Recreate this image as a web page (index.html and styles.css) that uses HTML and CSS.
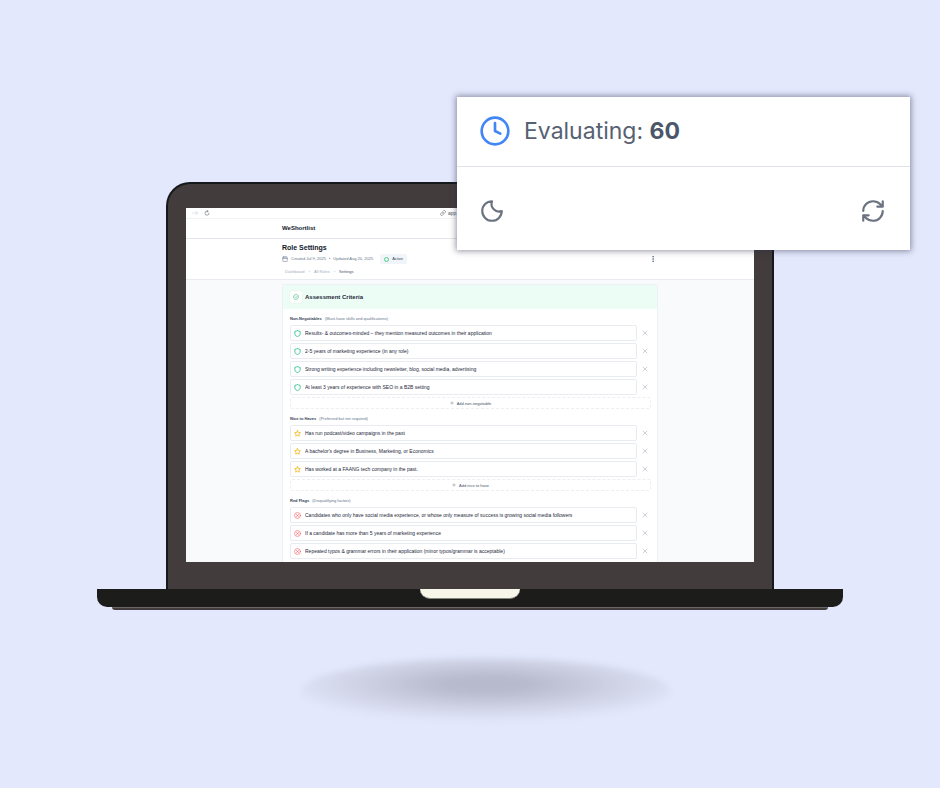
FILE: index.html
```html
<!DOCTYPE html>
<html lang="en">
<head>
  <meta charset="UTF-8">
  <title>WeShortlist - Role Settings</title>
  <link rel="stylesheet" href="styles.css">
</head>
<body>

  <!-- shared icons -->
  <svg class="sprite" aria-hidden="true">
    <symbol id="i-shield" viewBox="0 0 24 24"><path d="M12 1.500c2 2 5 3 9 3V14c0 4-4 7-9 8.500C7 21 3 18 3 14V4.500c4 0 7-1 9-3z"/></symbol>
    <symbol id="i-star" viewBox="0 0 24 24"><path d="M12 2l3.100 6.300 6.900 1-5 4.900 1.200 6.900L12 17.800l-6.200 3.300L7 14.200 2 9.300l6.900-1z"/></symbol>
    <symbol id="i-flag" viewBox="0 0 24 24"><circle cx="12" cy="12" r="10"/><path d="M15.500 8.500l-7 7M8.500 8.500l7 7"/></symbol>
    <symbol id="i-x" viewBox="0 0 24 24"><path d="M20 4L4 20M4 4l16 16"/></symbol>
    <symbol id="i-plus" viewBox="0 0 24 24"><path d="M4 12h16M12 4v16"/></symbol>
  </svg>

  <div class="scene">
    <div class="laptop">
      <div class="lid">
        <div class="screen">

          <div class="browser-bar">
            <svg class="icon forward" viewBox="0 0 24 24"><path d="M2 12h20M15 5l7 7-7 7"/></svg>
            <svg class="icon reload" viewBox="0 0 24 24"><path d="M20 13a8 8 0 1 1-8-8h4M12 1l4 4-4 4"/></svg>
            <span class="address">
              <svg class="icon" viewBox="0 0 24 24"><path d="M10 14a5 5 0 0 0 7 0l4-4a5 5 0 0 0-7-7l-2 2M14 10a5 5 0 0 0-7 0l-4 4a5 5 0 0 0 7 7l2-2"/></svg>
              app.weshortlist.com
            </span>
          </div>

          <header class="site-header">
            <div class="container brand">WeShortlist</div>
          </header>

          <section class="page-head">
            <div class="container">
              <h1>Role Settings</h1>
              <div class="meta">
                <svg class="icon" viewBox="0 0 24 24"><rect x="3" y="4" width="18" height="18" rx="2"/><path d="M8 1v6M16 1v6M3 10h18"/></svg>
                <span>Created Jul 9, 2025</span>
                <span>&bull;</span>
                <span>Updated Aug 20, 2025</span>
                <span class="badge"><i class="dot"></i>Active</span>
                <button class="menu" aria-label="More options"><svg class="icon" viewBox="0 0 24 24"><circle cx="12" cy="3" r="2"/><circle cx="12" cy="12" r="2"/><circle cx="12" cy="21" r="2"/></svg></button>
              </div>
              <nav class="crumbs">
                <a href="#">Dashboard</a>
                <span>&rsaquo;</span>
                <a href="#">All Roles</a>
                <span>&rsaquo;</span>
                <a href="#" class="current">Settings</a>
              </nav>
            </div>
          </section>

          <main>
            <div class="container card">
              <div class="card-head">
                <span class="card-icon"><svg class="icon" viewBox="0 0 24 24"><path d="M21.800 10A10 10 0 1 1 17 3.300M8 11l4 4L21 5"/></svg></span>
                <h2>Assessment Criteria</h2>
              </div>
              <div class="card-body">

                <div class="group must">
                  <h3>Non-Negotiables <small>(Must-have skills and qualifications)</small></h3>
                  <div class="row">
                    <label class="field"><svg class="icon"><use href="#i-shield"/></svg><input type="text" aria-label="Non-negotiable 1" value="Results- &amp; outcomes-minded – they mention measured outcomes in their application"></label>
                    <button class="remove" aria-label="Remove"><svg class="icon"><use href="#i-x"/></svg></button>
                  </div>
                  <div class="row">
                    <label class="field"><svg class="icon"><use href="#i-shield"/></svg><input type="text" aria-label="Non-negotiable 2" value="2-5 years of marketing experience (in any role)"></label>
                    <button class="remove" aria-label="Remove"><svg class="icon"><use href="#i-x"/></svg></button>
                  </div>
                  <div class="row">
                    <label class="field"><svg class="icon"><use href="#i-shield"/></svg><input type="text" aria-label="Non-negotiable 3" value="Strong writing experience including newsletter, blog, social media, advertising"></label>
                    <button class="remove" aria-label="Remove"><svg class="icon"><use href="#i-x"/></svg></button>
                  </div>
                  <div class="row">
                    <label class="field"><svg class="icon"><use href="#i-shield"/></svg><input type="text" aria-label="Non-negotiable 4" value="At least 3 years of experience with SEO in a B2B setting"></label>
                    <button class="remove" aria-label="Remove"><svg class="icon"><use href="#i-x"/></svg></button>
                  </div>
                  <button class="add"><svg class="icon"><use href="#i-plus"/></svg>Add non-negotiable</button>
                </div>

                <div class="group nice">
                  <h3>Nice to Haves <small>(Preferred but not required)</small></h3>
                  <div class="row">
                    <label class="field"><svg class="icon"><use href="#i-star"/></svg><input type="text" aria-label="Nice to have 1" value="Has run podcast/video campaigns in the past"></label>
                    <button class="remove" aria-label="Remove"><svg class="icon"><use href="#i-x"/></svg></button>
                  </div>
                  <div class="row">
                    <label class="field"><svg class="icon"><use href="#i-star"/></svg><input type="text" aria-label="Nice to have 2" value="A bachelor's degree in Business, Marketing, or Economics"></label>
                    <button class="remove" aria-label="Remove"><svg class="icon"><use href="#i-x"/></svg></button>
                  </div>
                  <div class="row">
                    <label class="field"><svg class="icon"><use href="#i-star"/></svg><input type="text" aria-label="Nice to have 3" value="Has worked at a FAANG tech company in the past."></label>
                    <button class="remove" aria-label="Remove"><svg class="icon"><use href="#i-x"/></svg></button>
                  </div>
                  <button class="add"><svg class="icon"><use href="#i-plus"/></svg>Add nice to have</button>
                </div>

                <div class="group flags">
                  <h3>Red Flags <small>(Disqualifying factors)</small></h3>
                  <div class="row">
                    <label class="field"><svg class="icon"><use href="#i-flag"/></svg><input type="text" aria-label="Red flag 1" value="Candidates who only have social media experience, or whose only measure of success is growing social media followers"></label>
                    <button class="remove" aria-label="Remove"><svg class="icon"><use href="#i-x"/></svg></button>
                  </div>
                  <div class="row">
                    <label class="field"><svg class="icon"><use href="#i-flag"/></svg><input type="text" aria-label="Red flag 2" value="If a candidate has more than 5 years of marketing experience"></label>
                    <button class="remove" aria-label="Remove"><svg class="icon"><use href="#i-x"/></svg></button>
                  </div>
                  <div class="row">
                    <label class="field"><svg class="icon"><use href="#i-flag"/></svg><input type="text" aria-label="Red flag 3" value="Repeated typos &amp; grammar errors in their application (minor typos/grammar is acceptable)"></label>
                    <button class="remove" aria-label="Remove"><svg class="icon"><use href="#i-x"/></svg></button>
                  </div>
                </div>

              </div>
            </div>
          </main>

        </div>
      </div>
      <div class="base"><div class="notch"></div></div>
      <div class="foot"></div>
    </div>

    <svg class="floor-shadow" viewBox="0 0 400 90" preserveAspectRatio="none">
      <defs>
        <radialGradient id="shade" cx="0.5" cy="0.4" r="0.55">
          <stop offset="0.2" stop-color="#b7bacc"/>
          <stop offset="0.6" stop-color="#cdd0e2"/>
          <stop offset="1" stop-color="#e2e6fa"/>
        </radialGradient>
        <filter id="soft" x="-10%" y="-30%" width="120%" height="160%"><feGaussianBlur stdDeviation="3"/></filter>
      </defs>
      <ellipse cx="200" cy="47" rx="185" ry="33" fill="url(#shade)" filter="url(#soft)"/>
    </svg>

    <aside class="popup">
      <div class="status">
        <svg class="icon" viewBox="0 0 24 24"><circle cx="12" cy="12" r="10"/><path d="M12 6v6l4 2"/></svg>
        <span>Evaluating: <strong>60</strong></span>
      </div>
      <div class="actions">
        <button aria-label="Dark mode"><svg class="icon" viewBox="0 0 24 24"><path d="M12 3a7 7 0 0 0 9 9 9 9 0 1 1-9-9z"/></svg></button>
        <button aria-label="Refresh"><svg class="icon" viewBox="0 0 24 24"><path d="M3 12a9 9 0 0 1 9-9 9.750 9.750 0 0 1 6.740 2.740L21 8M21 3v5h-5M21 12a9 9 0 0 1-9 9 9.750 9.750 0 0 1-6.740-2.740L3 16M8 16H3v5"/></svg></button>
      </div>
    </aside>
  </div>

</body>
</html>
```
FILE: styles.css
```css
* {
  box-sizing: border-box;
}
body {
  margin: 0;
  min-height: 100vh;
  background: #e3e8fd;
  font-family: Inter, "Liberation Sans", sans-serif;
}
h1, h2, h3 {
  margin: 0;
}
button {
  padding: 0;
  border: none;
  background: none;
  font-family: inherit;
  cursor: pointer;
}
a {
  color: inherit;
  text-decoration: none;
}
.sprite {
  display: none;
}
.icon {
  display: block;
  flex: none;
  width: 6px;
  height: 6px;
  fill: none;
  stroke: currentColor;
  stroke-width: 2;
  stroke-linecap: round;
  stroke-linejoin: round;
}
.scene {
  position: relative;
  max-width: 940px;
  margin: 0 auto;
  padding: 182px 97px 0;
}

/* laptop */
.lid {
  margin: 0 69px;
  padding: 24px 18px 27px;
  border: 2px solid #16191c;
  border-bottom: none;
  border-radius: 24px 24px 0 0;
  background: #433c3c;
}
.screen {
  height: 354px;
  overflow: hidden;
  background: #fff;
  color: #1e293b;
  font-family: "Liberation Sans", Arial, sans-serif;
}
.base {
  height: 18px;
  border-radius: 0 0 10px 10px;
  background: #1c1c1a;
}
.notch {
  width: 100px;
  height: 10px;
  margin: 0 auto;
  border-bottom: 1px solid #85857e;
  border-radius: 0 0 10px 10px;
  background: #f8f5e9;
}
.foot {
  height: 3px;
  margin: 0 15px;
  border-top: 1px solid #6b6565;
  border-radius: 0 0 3px 3px;
  background: #433c3c;
}
.floor-shadow {
  display: block;
  width: 400px;
  max-width: 100%;
  height: 90px;
  margin: 34px auto 0;
  transform: translateX(16px);
}

/* app */
.container {
  max-width: 376px;
  margin: 0 auto;
}
.browser-bar {
  display: flex;
  align-items: center;
  height: 11px;
  padding-left: 6px;
  border-bottom: 1px solid #f1f3f5;
  color: #4b5563;
  font-size: 5px;
}
.forward {
  color: #c4c8ce;
}
.reload {
  margin-left: 6px;
}
.address {
  display: flex;
  align-items: center;
  gap: 2px;
  margin-left: 230px;
}
.site-header {
  padding: 5px 0;
  border-bottom: 1px solid #e2e5ea;
}
.brand {
  font-size: 6px;
  line-height: 9px;
  font-weight: 700;
  color: #0f172a;
}
.page-head {
  padding: 4px 0 3px;
  border-bottom: 1px solid #e8ebef;
}
h1 {
  font-size: 7px;
  line-height: 9px;
  font-weight: 700;
  color: #0f172a;
}
.meta {
  display: flex;
  align-items: center;
  gap: 3px;
  margin-top: 2px;
  font-size: 4px;
  line-height: 10px;
  color: #64748b;
}
.badge {
  display: flex;
  align-items: center;
  gap: 3px;
  margin-left: 4px;
  padding: 0 4px;
  border-radius: 2px;
  background: #f1f5f9;
  color: #334155;
}
.dot {
  width: 5px;
  height: 5px;
  border: 1px solid #4ad28a;
  border-radius: 50%;
}
.menu {
  margin-left: auto;
  padding: 0 2px;
  color: #475569;
}
.crumbs {
  display: flex;
  gap: 4px;
  margin-top: 4px;
  padding-left: 3px;
  font-size: 4px;
  line-height: 8px;
  color: #a3adbb;
}
.current {
  color: #475569;
}
main {
  padding: 4px 0;
  background: #f8fafc;
}
.card {
  border: 1px solid #eef1f4;
  border-radius: 3px;
  background: #fff;
  overflow: hidden;
}
.card-head {
  display: flex;
  align-items: center;
  gap: 3px;
  height: 24px;
  padding: 0 7px;
  background: #ecfdf5;
}
.card-icon {
  padding: 3px;
  border-radius: 2px;
  background: #fff;
  box-shadow: 0 0 1px #cfd8d6;
  color: #10a36f;
}
h2 {
  font-size: 6px;
  font-weight: 700;
  line-height: 8px;
  color: #1e293b;
}
.card-body {
  display: grid;
  gap: 6px;
  padding: 6px 6px 20px 7px;
}
.group {
  display: grid;
  gap: 2px;
}
h3 {
  font-size: 4px;
  line-height: 8px;
  font-weight: 700;
  color: #334155;
}
h3 small {
  margin-left: 2px;
  font-size: 4px;
  font-weight: 400;
  color: #64748b;
}
.row {
  display: flex;
  align-items: center;
  gap: 5px;
}
.field {
  flex: 1;
  display: flex;
  align-items: center;
  gap: 4px;
  height: 16px;
  padding: 0 3px;
  border: 1px solid #e8ebf0;
  border-radius: 2px;
}
.field .icon {
  width: 7px;
  height: 7px;
  stroke-width: 3;
}
.field input {
  flex: 1;
  min-width: 0;
  padding: 0;
  border: none;
  outline: none;
  background: none;
  font-family: inherit;
  font-size: 5px;
  line-height: 8px;
  color: #1e293b;
}
.must .field {
  color: #34c38f;
}
.nice .field {
  color: #f5bd27;
}
.flags .field {
  color: #f4515c;
}
.flags .icon {
  stroke-width: 2;
}
.remove {
  padding-right: 3px;
  color: #94a3b8;
}
.add {
  display: flex;
  align-items: center;
  justify-content: center;
  gap: 3px;
  height: 12px;
  border: 1px dashed #eceef2;
  border-radius: 2px;
  font-size: 4px;
  color: #475569;
}
.add .icon {
  width: 4px;
  height: 4px;
}

/* status popup over the laptop */
.popup {
  position: absolute;
  top: 97px;
  right: 30px;
  width: calc(100% - 60px);
  max-width: 453px;
  background: #fff;
  box-shadow: 0 0 6px 1px rgba(40, 40, 70, 0.5);
  color: #566172;
}
.status {
  display: flex;
  align-items: center;
  gap: 13px;
  height: 70px;
  padding: 0 22px 2px;
  border-bottom: 1px solid #dfe2e7;
  font-size: 23px;
  line-height: 32px;
}
.status .icon {
  width: 32px;
  height: 32px;
  color: #4285f5;
}
.status strong {
  font-weight: 700;
  color: #4b5768;
}
.actions {
  display: flex;
  justify-content: space-between;
  padding: 31px 24px 26px 22px;
  color: #6b7280;
}
.actions button {
  color: inherit;
}
.actions .icon {
  width: 26px;
  height: 26px;
}
```
